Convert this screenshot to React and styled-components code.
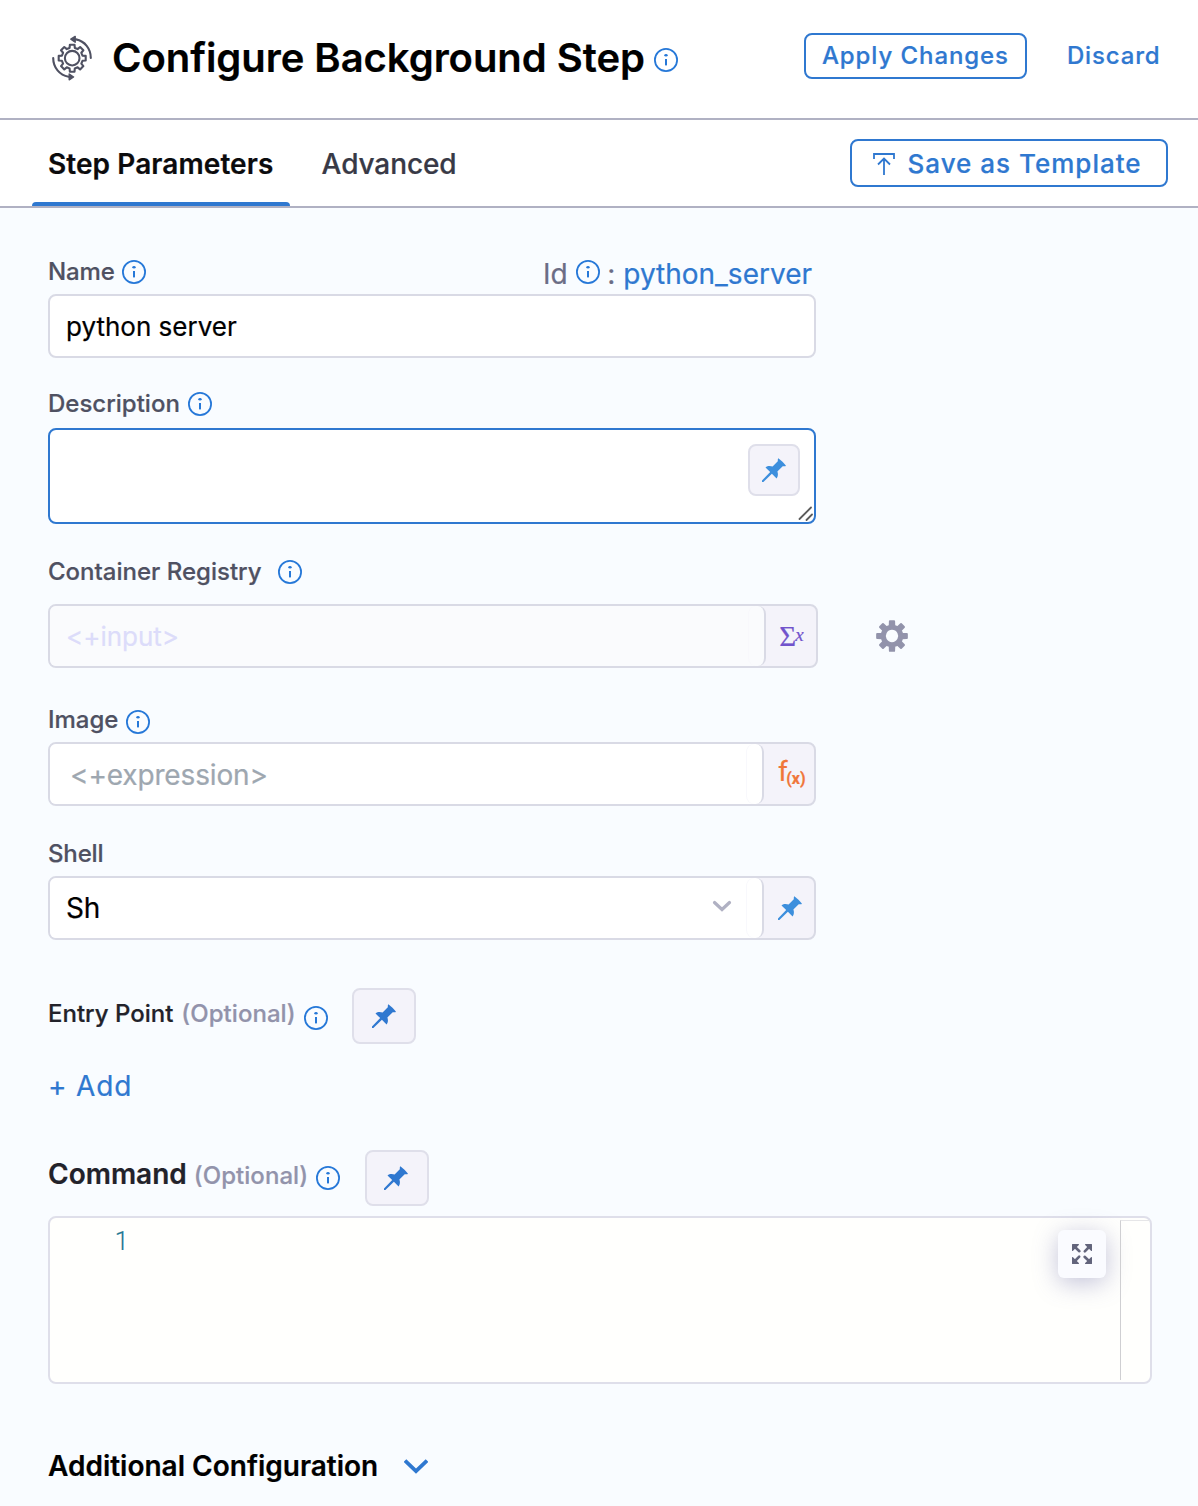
import React from 'react';
import styled, { createGlobalStyle } from 'styled-components';

const BLUE = '#2f78d0';
const BORDER = '#d9dae5';

const GlobalStyle = createGlobalStyle`
  * { box-sizing: border-box; }
  body {
    margin: 0;
    background: #f9fcff;
    font-family: Inter, "Liberation Sans", sans-serif;
    color: #000;
    -webkit-text-stroke: 0.22px;
  }
  button, input, textarea { font-family: inherit; margin: 0; }
`;

const Page = styled.div`
  width: 1198px;
  height: 1506px;
  overflow: hidden;
  display: flex;
  flex-direction: column;
  background: #f9fcff;
`;

const Header = styled.header`
  height: 120px;
  flex: none;
  display: flex;
  align-items: flex-start;
  padding: 33px 37.5px 0 50px;
  background: #fff;
  border-bottom: 2px solid #b0b1c3;
`;

const HeaderIcon = styled.svg`
  width: 44px;
  height: 48px;
  margin-top: 1px;
  flex: none;
`;

const Title = styled.h1`
  margin: 0 0 0 18px;
  font-size: 40px;
  font-weight: 600;
  line-height: 50px;
  letter-spacing: -0.045px;
  white-space: nowrap;
`;

const InfoSvg = styled.svg`
  width: 24px;
  height: 24px;
  flex: none;
  margin-left: ${(p) => p.$left || 0}px;
  margin-top: ${(p) => p.$top || 0}px;
`;

const Spacer = styled.div`
  flex: 1;
`;

const Actions = styled.div`
  display: flex;
  align-items: flex-start;
  gap: 39.5px;
`;

const OutlineButton = styled.button`
  width: ${(p) => p.$width}px;
  height: ${(p) => p.$height}px;
  flex: none;
  display: flex;
  align-items: center;
  padding: 0 0 ${(p) => p.$lift || 0}px ${(p) => p.$pad}px;
  border: 2px solid ${BLUE};
  border-radius: 8px;
  background: #fff;
  color: ${BLUE};
  font-size: ${(p) => p.$size}px;
  font-weight: 500;
  letter-spacing: ${(p) => p.$spacing}px;
  white-space: nowrap;
`;

const TextButton = styled.button`
  border: 0;
  padding: 0;
  background: none;
  color: ${BLUE};
  text-align: left;
  font-size: ${(p) => p.$size}px;
  font-weight: ${(p) => p.$weight};
  letter-spacing: 0.85px;
  line-height: ${(p) => p.$line}px;
  white-space: nowrap;
`;

const Tabs = styled.nav`
  height: 88px;
  flex: none;
  display: flex;
  align-items: flex-start;
  padding: 0 30px 0 32px;
  background: #fff;
  border-bottom: 2px solid #b0b1c3;
`;

const Tab = styled.div`
  height: 86px;
  padding: 0 16px;
  font-size: 28px;
  line-height: 88px;
  font-weight: ${(p) => (p.$active ? 600 : 500)};
  color: ${(p) => (p.$active ? '#0b0b0d' : '#383946')};
  letter-spacing: ${(p) => (p.$active ? 0.08 : -0.1)}px;
  white-space: nowrap;
  display: flex;
  flex-direction: column;
  width: ${(p) => p.$width}px;
  margin-right: 15.6px;

  &::after {
    content: '';
    flex: none;
    height: 4px;
    margin: -6px -16px 0;
    border-radius: 4px 4px 0 0;
    background: ${(p) => (p.$active ? BLUE : 'transparent')};
  }
`;

const TabAction = styled.div`
  margin-top: 19px;
  svg { margin: 1px 12.5px 0 0; flex: none; }
`;

const Form = styled.main`
  flex: 1;
  display: flex;
  flex-direction: column;
  padding: 0 46px 0 48px;
`;

const LabelRow = styled.div`
  display: flex;
  align-items: flex-start;
  width: 768px;
  height: ${(p) => p.$height}px;
  margin-top: ${(p) => p.$gap}px;
  flex: none;
`;

const Label = styled.label`
  font-size: ${(p) => p.$size || 24}px;
  font-weight: ${(p) => p.$weight || 500};
  line-height: 30px;
  color: ${(p) => p.$color || '#4f5162'};
  letter-spacing: ${(p) => p.$spacing || 0}px;
  margin: ${(p) => (p.$top === undefined ? 1 : p.$top)}px ${(p) => p.$right || 0}px 0 ${(p) => p.$left || 0}px;
  white-space: nowrap;
`;

const Field = styled.div`
  width: ${(p) => p.$width || 768}px;
  height: ${(p) => p.$height || 64}px;
  flex: none;
  display: flex;
  align-items: stretch;
  border: 2px solid ${(p) => (p.$focused ? BLUE : BORDER)};
  border-radius: 8px;
  background: ${(p) => (p.$plain ? '#fff' : '#f4f3fa')};
  overflow: hidden;
`;

const Value = styled.input`
  flex: 1;
  min-width: 0;
  border: 0;
  outline: 0;
  padding: ${(p) => p.$drop || 0}px 0 0 ${(p) => p.$pad || 16}px;
  font-size: ${(p) => p.$size || 26}px;
  letter-spacing: ${(p) => p.$spacing || 0}px;
  color: #000;
  background: transparent;
  &::placeholder { color: ${(p) => p.$hint || '#9ea7b0'}; opacity: 1; }
`;

const Inner = styled.div`
  flex: 1;
  display: flex;
  align-items: stretch;
  background: ${(p) => (p.$muted ? '#fafbfd' : '#fff')};
  border-right: 2px solid ${BORDER};
  border-radius: 0 8px 8px 0;
`;

const Cap = styled.span`
  width: 16px;
  border-radius: 8px;
  box-shadow: inset 1px 0 0 #f8f8fc;
`;

const Arrow = styled.svg`
  align-self: center;
  width: 20px;
  height: 14px;
  margin: -4px 14px 0 0;
  flex: none;
`;

const Addon = styled.div`
  width: 50px;
  display: flex;
  align-items: center;
  justify-content: center;
  svg { margin-left: 2px; }
`;

const PinBox = styled.button`
  width: ${(p) => p.$width}px;
  height: ${(p) => p.$height}px;
  flex: none;
  display: flex;
  align-items: center;
  justify-content: center;
  padding: 0 ${(p) => p.$nudge || 0}px 0 0;
  margin-left: ${(p) => p.$left || 0}px;
  border: 2px solid #dfdfea;
  border-radius: 8px;
  background: #f4f3fa;
`;

const Area = styled.textarea`
  flex: 1;
  border: 0;
  outline: 0;
  resize: none;
  padding: 12px 16px;
  font-size: 26px;
  background: transparent;
`;

const AreaTools = styled.div`
  width: 66px;
  display: flex;
  flex-direction: column;
  padding-top: 14px;
`;

const Grip = styled.svg`
  width: 16px;
  height: 16px;
  align-self: flex-end;
  margin-top: 9px;
`;

const FieldLine = styled.div`
  display: flex;
  align-items: center;
`;

const Gear = styled.svg`
  width: 32px;
  height: 32px;
  margin-left: 58px;
`;

const Formula = styled.span`
  display: flex;
  align-items: baseline;
  margin-left: ${(p) => p.$left || 0}px;
  color: ${(p) => p.$color};
  font-family: ${(p) => p.$family};
  line-height: 30px;
`;

const Glyph = styled.span`
  font-size: ${(p) => p.$size}px;
  font-style: ${(p) => (p.$italic ? 'italic' : 'normal')};
  font-weight: ${(p) => p.$weight || 400};
  transform: translate(${(p) => p.$x || 0}px, ${(p) => p.$y || 0}px);
`;

const Editor = styled.div`
  height: 168px;
  flex: none;
  display: flex;
  padding: 2px 0;
  border: 2px solid #dfdfea;
  border-radius: 8px;
  background: #fffffd;
`;

const LineNumber = styled.span`
  width: 78.5px;
  text-align: right;
  font-family: Roboto, sans-serif;
  font-size: 25px;
  font-weight: 300;
  line-height: 44px;
  color: #237893;
`;

const Expand = styled.button`
  width: 48px;
  height: 48px;
  padding: 0;
  margin: 10px 14px 0 0;
  display: flex;
  align-items: center;
  justify-content: center;
  border: 0;
  border-radius: 6px;
  background: #fafbff;
  box-shadow: 0 5px 24px rgba(96, 97, 160, 0.38);
`;

const Ruler = styled.span`
  width: 30px;
  border-left: 1px solid #cfcfd2;
  border-top: 1px solid #e6e6e8;
`;

const Section = styled.div`
  display: flex;
  align-items: center;
  margin-top: 64px;
  height: 36px;
  font-size: 28px;
  font-weight: 600;
  svg { margin-left: 26px; }
`;

const Info = ({ left, top }) => (
  <InfoSvg viewBox="0 0 24 24" $left={left} $top={top}>
    <circle cx="12" cy="12" r="11.1" fill="none" stroke="#2678d8" strokeWidth="1.8" />
    <ellipse cx="12" cy="7.3" rx="1.7" ry="1.2" fill="#2678d8" />
    <rect x="11" y="11" width="2" height="6.4" fill="#2678d8" />
  </InfoSvg>
);

const Pin = ({ color = '#3d8fdd' }) => (
  <svg width="24" height="24" viewBox="0 0 24 24">
    <path
      fill={color}
      d="M16.2.2 C17.6.8 23 6 24 7.9 C22.6 8.4 21.5 8.1 20.7 8.3 L15.4 13.4 C16.2 15.8 16.2 18.3 14.6 20.4 L9.9 15.8 L1.4 24 L0 24 L0 22.6 L8.2 14.1 L3.5 9.4 C5.6 7.8 8.2 7.8 10.6 8.6 L15.8 3.3 C15.9 2.4 15.6 1.4 16.2.2Z"
    />
  </svg>
);

const gearPoints = (cx, cy, teeth, outer, inner, wideOut, wideIn) => {
  const pts = [];
  for (let i = 0; i < teeth; i += 1) {
    const a = (i / teeth) * Math.PI * 2 - Math.PI / 2;
    [[inner, -wideIn], [outer, -wideOut], [outer, wideOut], [inner, wideIn]].forEach(([r, d]) => {
      pts.push(`${(cx + r * Math.cos(a + d)).toFixed(2)},${(cy + r * Math.sin(a + d)).toFixed(2)}`);
    });
  }
  return pts.join(' ');
};

const StepIcon = () => (
  <HeaderIcon viewBox="0 0 44 48" fill="none" stroke="#4f5162" strokeWidth="2.1" strokeLinejoin="round" strokeLinecap="round">
    <polygon points={gearPoints(22.2, 24.2, 8, 13.7, 10.6, 0.17, 0.25)} />
    <circle cx="22.2" cy="24.2" r="7.3" />
    <path d="M26 5.4 C34.8 7.2 40.8 14.6 40.8 24" />
    <path d="M3.2 24 C3.2 33.6 9.6 41.2 18.6 42.8" />
    <path strokeWidth="1.4" d="M20.8 5.2 L25.2 2.4 L25.2 8.2Z M23.6 43 L19.2 40 L19.2 45.8Z" fill="#4f5162" />
  </HeaderIcon>
);

const ExpandIcon = () => (
  <svg width="20" height="20" viewBox="0 0 20 20" fill="#63657c" stroke="#63657c">
    {[0, 90, 180, 270].map((r) => (
      <g key={r} transform={`rotate(${r} 10 10)`}>
        <path d="M.6.6 H6.4 L.6 6.4Z" strokeWidth="1.2" strokeLinejoin="round" />
        <path d="M3 3 L7.4 7.2" strokeWidth="2.6" strokeLinecap="round" />
      </g>
    ))}
  </svg>
);

export default function App() {
  return (
    <Page>
      <GlobalStyle />
      <Header>
        <StepIcon />
        <Title>Configure Background Step</Title>
        <Info left={9} top={15} />
        <Spacer />
        <Actions>
          <OutlineButton $width={223} $height={46} $pad={15.5} $size={24} $spacing={0.92} $lift={1}>
            Apply Changes
          </OutlineButton>
          <TextButton $size={24} $weight={500} $line={46}>Discard</TextButton>
        </Actions>
      </Header>

      <Tabs>
        <Tab $active $width={258}>Step Parameters</Tab>
        <Tab $width={170}>Advanced</Tab>
        <Spacer />
        <TabAction>
          <OutlineButton $width={318} $height={48} $pad={21} $size={26} $spacing={1}>
            <svg width="22" height="22" viewBox="0 0 22 22" fill="none" stroke={BLUE} strokeWidth="1.8">
              <path d="M1 6 V1 H21 V6 M11 22 V6 M5 11.5 L11 5.5 L17 11.5" />
            </svg>
            Save as Template
          </OutlineButton>
        </TabAction>
      </Tabs>

      <Form>
        <LabelRow $gap={48} $height={38}>
          <Label $spacing={-0.15}>Name</Label>
          <Info left={7.6} top={4} />
          <Spacer />
          <Label $size={28} $weight={400} $color="#6b6d85" $top={3}>Id</Label>
          <Info left={8.6} top={4} />
          <Label $size={28} $weight={400} $color="#6b6d85" $top={3} $left={7}>:</Label>
          <Label $size={28} $weight={400} $color={BLUE} $top={3} $left={8} $right={4}>python_server</Label>
        </LabelRow>
        <Field $plain>
          <Value defaultValue="python server" />
        </Field>

        <LabelRow $gap={30} $height={40}>
          <Label>Description</Label>
          <Info left={8} top={4} />
        </LabelRow>
        <Field $height={96} $focused $plain>
          <Area />
          <AreaTools>
            <PinBox $width={52} $height={52}><Pin /></PinBox>
            <Grip viewBox="0 0 16 16" stroke="#5c5c5c" strokeWidth="1.8" strokeLinecap="round">
              <path d="M1.5 14 L13 2.5 M8.5 15 L14 9.5" />
            </Grip>
          </AreaTools>
        </Field>

        <LabelRow $gap={32} $height={48}>
          <Label>Container Registry</Label>
          <Info left={16.4} top={4} />
        </LabelRow>
        <FieldLine>
          <Field $width={770}>
            <Inner $muted>
              <Value placeholder="<+input>" $hint="#dcdcfa" />
              <Cap />
            </Inner>
            <Addon>
              <Formula $color="#7153cc" $family='"Liberation Serif", serif' $left={2}>
                <Glyph $size={29} $y={1.5}>Σ</Glyph>
                <Glyph $size={19} $italic $x={-1} $y={-3.5}>x</Glyph>
              </Formula>
            </Addon>
          </Field>
          <Gear viewBox="0 0 32 32" fill="#9293ab">
            <path
              fillRule="evenodd"
              stroke="#9293ab"
              strokeWidth="2"
              strokeLinejoin="round"
              d={`M${gearPoints(16, 16, 8, 15, 10.4, 0.14, 0.22).split(' ').join('L')}Z M16 8.8 a7.2 7.2 0 1 0 .01 0Z`}
            />
          </Gear>
        </FieldLine>

        <LabelRow $gap={36} $height={38}>
          <Label>Image</Label>
          <Info left={8} top={6} />
        </LabelRow>
        <Field>
          <Inner>
            <Value placeholder="<+expression>" $size={28} $pad={20} $spacing={-0.15} $drop={2} />
            <Cap />
          </Inner>
          <Addon>
            <Formula $color="#f0763a" $family="Roboto, sans-serif" $left={6}>
              <Glyph $size={28} $x={0.5}>f</Glyph>
              <Glyph $size={16} $weight={700} $x={-1} $y={2.5}>(x)</Glyph>
            </Formula>
          </Addon>
        </Field>

        <LabelRow $gap={32} $height={38}>
          <Label $spacing={-0.15}>Shell</Label>
        </LabelRow>
        <Field>
          <Inner>
            <Value defaultValue="Sh" $size={28} $spacing={-0.2} />
            <Arrow viewBox="0 0 20 14" fill="none" stroke="#b0b1c3" strokeWidth="3.2" strokeLinecap="round">
              <path d="M2.5 3.5 L10 10.5 L17.5 3.5" />
            </Arrow>
            <Cap />
          </Inner>
          <Addon><Pin /></Addon>
        </Field>

        <LabelRow $gap={48} $height={56}>
          <Label $color="#22222a" $top={11}>Entry Point</Label>
          <Label $color="#9293ab" $top={11} $left={8} $spacing={0.05}>(Optional)</Label>
          <Info left={8.4} top={18} />
          <PinBox $width={64} $height={56} $left={24}><Pin color={BLUE} /></PinBox>
        </LabelRow>

        <LabelRow $gap={24} $height={36}>
          <TextButton $size={28} $weight={400} $line={36}>+ Add</TextButton>
        </LabelRow>

        <LabelRow $gap={46} $height={66}>
          <Label $size={28} $weight={600} $color="#22222a" $top={9}>Command</Label>
          <Label $color="#9293ab" $top={11} $left={7} $spacing={0.05}>(Optional)</Label>
          <Info left={7.6} top={16} />
          <PinBox $width={64} $height={56} $left={25} $nudge={2}><Pin color={BLUE} /></PinBox>
        </LabelRow>
        <Editor>
          <LineNumber>1</LineNumber>
          <Spacer />
          <Expand><ExpandIcon /></Expand>
          <Ruler />
        </Editor>

        <Section>
          Additional Configuration
          <svg width="24" height="16" viewBox="0 0 24 16" fill="none" stroke={BLUE} strokeWidth="3.8">
            <path d="M1 2.5 L12 13 L23 2.5" />
          </svg>
        </Section>
      </Form>
    </Page>
  );
}
